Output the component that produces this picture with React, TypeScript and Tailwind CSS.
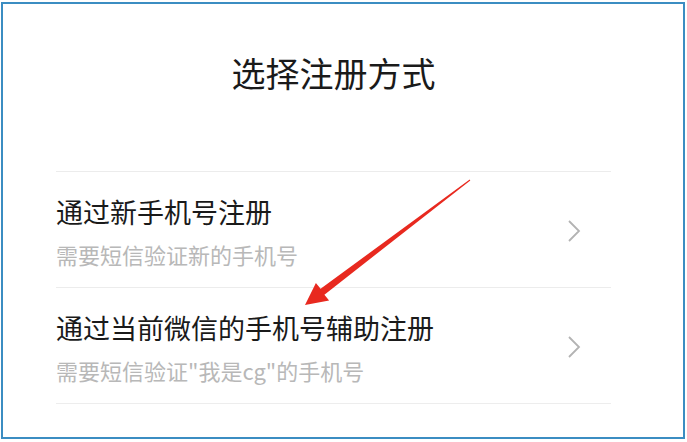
import React from "react";

const font = { fontFamily: '"Noto Sans CJK SC", "Noto Sans", sans-serif' };

function Chevron() {
  return (
    <svg width="14" height="24" viewBox="0 0 14 24" className="shrink-0">
      <path d="M2 2 L12 12 L2 22" fill="none" stroke="#b3b3b3" strokeWidth="1.8" strokeLinejoin="miter" />
    </svg>
  );
}

function Item({ title, sub }: { title: string; sub: string }) {
  return (
    <div className="flex items-center border-t border-[#ececec] pt-[26px] pb-[22px]">
      <div className="flex-1">
        <div className="h-[27px] leading-[27px] text-[27px] text-[#1a1a1a] whitespace-nowrap">{title}</div>
        <div className="mt-[18px] h-[22px] leading-[22px] text-[22px] text-[#b8b8b8] whitespace-nowrap">{sub}</div>
      </div>
      <div className="mr-[30px] mt-[-2px]">
        <Chevron />
      </div>
    </div>
  );
}

export default function App() {
  return (
    <div className="relative w-[687px] h-[442px] bg-white overflow-hidden" style={font}>
      <div className="ml-[1px] mt-[2px] w-[684px] h-[437px] border-2 border-[#3b8dc2] bg-white">
        <div className="ml-[53px] w-[555px] pt-[52px]">
          <div className="h-[34px] leading-[34px] text-[34px] text-[#1a1a1a] text-center">选择注册方式</div>
          <div className="mt-[81px]">
            <Item title="通过新手机号注册" sub="需要短信验证新的手机号" />
            <Item title="通过当前微信的手机号辅助注册" sub={'需要短信验证"我是cg"的手机号'} />
            <div className="border-t border-[#ededed]" />
          </div>
        </div>
      </div>
      <svg className="absolute left-0 top-0 pointer-events-none" width="687" height="442" viewBox="0 0 687 442">
        <polygon
          points="305,305 315.9,282.9 320.6,288.7 469.7,179.6 470.3,180.4 324.4,294.7 329.1,300.5"
          fill="#e8291f"
        />
      </svg>
    </div>
  );
}
